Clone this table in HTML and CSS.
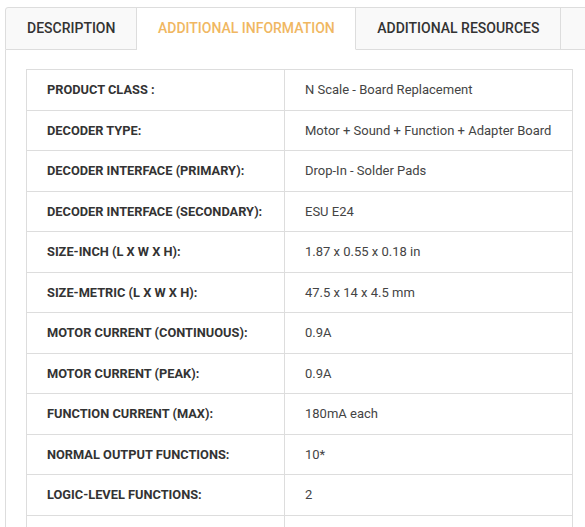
FILE: index.html
```html
<!DOCTYPE html>
<html>
<head>
<meta charset="utf-8">
<link rel="stylesheet" href="styles.css">
</head>
<body>
<div class="wrap">
  <div class="tabs">
    <div class="tab">DESCRIPTION</div>
    <div class="tab active">ADDITIONAL INFORMATION</div>
    <div class="tab">ADDITIONAL RESOURCES</div>
    <div class="tab tab-more"></div>
  </div>
  <div class="panel">
    <table class="specs">
      <tr><th>PRODUCT CLASS :</th><td>N Scale - Board Replacement</td></tr>
      <tr><th>DECODER TYPE:</th><td>Motor + Sound + Function + Adapter Board</td></tr>
      <tr><th>DECODER INTERFACE (PRIMARY):</th><td>Drop-In - Solder Pads</td></tr>
      <tr><th>DECODER INTERFACE (SECONDARY):</th><td>ESU E24</td></tr>
      <tr><th>SIZE-INCH (L X W X H):</th><td>1.87 x 0.55 x 0.18 in</td></tr>
      <tr><th>SIZE-METRIC (L X W X H):</th><td>47.5 x 14 x 4.5 mm</td></tr>
      <tr><th>MOTOR CURRENT (CONTINUOUS):</th><td>0.9A</td></tr>
      <tr><th>MOTOR CURRENT (PEAK):</th><td>0.9A</td></tr>
      <tr><th>FUNCTION CURRENT (MAX):</th><td>180mA each</td></tr>
      <tr><th>NORMAL OUTPUT FUNCTIONS:</th><td>10*</td></tr>
      <tr><th>LOGIC-LEVEL FUNCTIONS:</th><td>2</td></tr>
      <tr class="empty-row"><th></th><td></td></tr>
    </table>
  </div>
</div>
</body>
</html>
```
FILE: styles.css
```css
html, body {
  margin: 0;
  padding: 0;
  overflow: hidden;
  background: #fff;
}
body {
  font-family: Roboto, "Liberation Sans", Arial, sans-serif;
  color: #333;
}
.wrap {
  margin: 7px 0 0 5px;
  width: 640px;
}
.tabs {
  display: flex;
  border: 1px solid #dddddd;
  border-radius: 3px 0 0 0;
  background: #f9f9f9;
}
.tab {
  height: 41px;
  line-height: 41px;
  padding: 0 20.5px 0 21px;
  font-size: 14px;
  font-weight: 500;
  color: #333;
  border-right: 1px solid #dddddd;
  white-space: nowrap;
  margin-bottom: -1px;
  border-bottom: 1px solid #dddddd;
}
.tab:first-child {
  border-radius: 3px 0 0 0;
}
.tab.active {
  background: #fff;
  color: #f0b762;
  border-bottom-color: #fff;
}
.tab-more {
  width: 60px;
  padding: 0;
}
.panel {
  border-left: 1px solid #dddddd;
  padding: 19px 0 0 20px;
}
.specs {
  border-collapse: collapse;
  width: 547px;
}
.specs th, .specs td {
  border: 1px solid #dddddd;
  padding: 10px 20px;
  line-height: 19.5px;
  height: 19.5px;
  text-align: left;
  vertical-align: middle;
}
.specs th {
  width: 217px;
  font-size: 12.8px;
  font-weight: 700;
  color: #333;
}
.specs td {
  font-size: 13px;
  font-weight: 400;
  color: #444;
}
```
